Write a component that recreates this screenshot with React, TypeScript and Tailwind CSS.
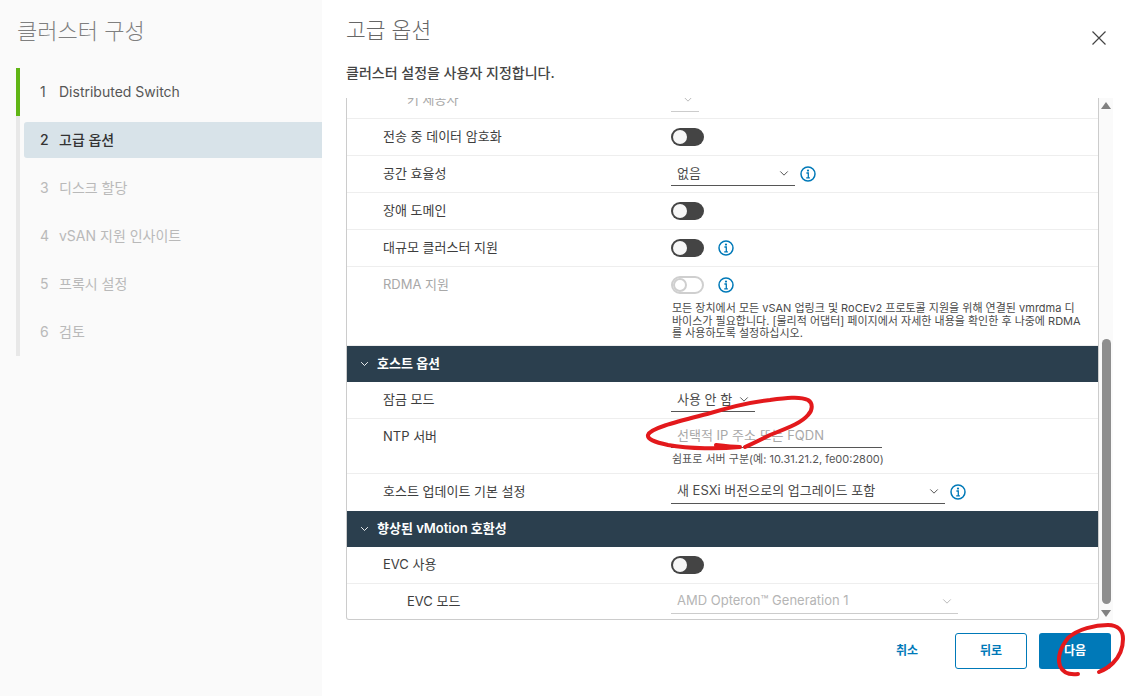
import React from 'react';

const font = 'font-["Inter","Noto_Sans_CJK_KR",sans-serif]';

const steps = [
  { n: 1, label: 'Distributed Switch', state: 'done' },
  { n: 2, label: '고급 옵션', state: 'active' },
  { n: 3, label: '디스크 할당', state: 'off' },
  { n: 4, label: 'vSAN 지원 인사이트', state: 'off' },
  { n: 5, label: '프록시 설정', state: 'off' },
  { n: 6, label: '검토', state: 'off' },
];

function Chevron({ className }: { className: string }) {
  return (
    <svg viewBox="0 0 12 8" fill="none" stroke="currentColor" strokeWidth="1.2" className={className}>
      <path d="M1.5 1.5 6 6l4.5-4.5" />
    </svg>
  );
}

function Info() {
  return (
    <svg viewBox="0 0 16 16" className="w-4 h-4 shrink-0 text-[#0079b8]" fill="none" stroke="currentColor">
      <circle cx="8" cy="8" r="7" strokeWidth="1.5" />
      <circle cx="8" cy="4.6" r="1.1" fill="currentColor" stroke="none" />
      <path d="M6.4 7h1.9v4.6M6.2 11.8h3.7" strokeWidth="1.3" />
    </svg>
  );
}

function Toggle({ disabled }: { disabled?: boolean }) {
  if (disabled) {
    return (
      <div className="w-[33px] h-[18px] rounded-full border-2 border-[#cfcfcf] bg-white flex items-center">
        <div className="w-[14px] h-[14px] rounded-full border-2 border-[#cfcfcf] bg-white" />
      </div>
    );
  }
  return (
    <div className="w-[33px] h-[18px] rounded-full bg-[#444444] flex items-center pl-[2px]">
      <div className="w-[14px] h-[14px] rounded-full bg-[#f7f7f7]" />
    </div>
  );
}

function Select({ value, width, textClass, lineClass, chevronClass }: { value: string; width: string; textClass?: string; lineClass?: string; chevronClass?: string }) {
  return (
    <div className={`${width} h-[24px] flex items-center justify-between pl-[6px] pr-[6px] border-b ${lineClass ?? 'border-[#565656]'} ${textClass ?? 'text-[#4a4a4a]'}`}>
      <span className="text-[13px] whitespace-nowrap">{value}</span>
      <Chevron className={`w-[10px] h-[7px] shrink-0 ${chevronClass ?? 'text-[#565656]'}`} />
    </div>
  );
}

function Row({ label, indent, muted, last, children }: { label: string; indent?: boolean; muted?: boolean; last?: boolean; children: React.ReactNode }) {
  return (
    <div className={`flex items-center h-[37px] ${last ? 'pb-[2px]' : 'border-b border-[#eeeeee]'}`}>
      <div className={`w-[324px] shrink-0 text-[13px] ${indent ? 'pl-[60px]' : 'pl-[36px]'} ${muted ? 'text-[#a8a8a8]' : 'text-[#3d3d3d]'}`}>
        {label}
      </div>
      <div className="flex items-center gap-[14px]">{children}</div>
    </div>
  );
}

function SectionHead({ title }: { title: string }) {
  return (
    <div className="h-[36px] bg-[#2b3f4e] text-white flex items-center pl-[13px] gap-[8px] text-[13px] font-semibold">
      <Chevron className="w-[9px] h-[6px]" />
      {title}
    </div>
  );
}

export default function App() {
  return (
    <div className={`${font} w-[1144px] h-[696px] flex bg-white overflow-hidden relative`}>
      <aside className="w-[322px] shrink-0 bg-[#fafafa] pt-[15px]">
        <h1 className="pl-[17px] text-[22px] font-light leading-[32px] text-[#7f7f7f]">클러스터 구성</h1>
        <div className="ml-[16px] mt-[21px] pt-[6px] border-l-4 border-[#e8e8e8] h-[288px] relative">
          <div className="absolute -left-[4px] top-0 w-[4px] h-[48px] bg-[#60b515]" />
          {steps.map((s) => (
            <div
              key={s.n}
              className={`h-[36px] mb-[12px] ml-[4px] pl-[16px] pb-[2px] flex items-center gap-[11px] text-[14px] rounded-l-[3px] ${
                s.state === 'active' ? 'bg-[#d8e3e9] text-[#333333] font-medium' : s.state === 'done' ? 'text-[#565656]' : 'text-[#b9b9b9]'
              }`}
            >
              <span className="w-[8px]">{s.n}</span>
              <span>{s.label}</span>
            </div>
          ))}
        </div>
      </aside>

      <main className="flex-1 pl-[24px] pr-[33px] pt-[15px] flex flex-col">
        <div className="flex items-start justify-between">
          <h2 className="text-[21.5px] font-light leading-[30px] text-[#666666]">고급 옵션</h2>
          <svg viewBox="0 0 14 14" className="w-[14px] h-[14px] mt-[16px] mr-[7px] text-[#444444]" fill="none" stroke="currentColor" strokeWidth="1.2">
            <path d="M.5.5l13 13M13.5.5l-13 13" />
          </svg>
        </div>
        <p className="mt-[20px] text-[14px] font-medium leading-[16px] text-[#444444]">클러스터 설정을 사용자 지정합니다.</p>

        <div className="mt-[17px] flex items-stretch w-[767px] h-[522px]">
          <div className="w-[753px] shrink-0 border-l border-r border-b border-[#cccccc] rounded-b-[3px] overflow-hidden">
            <div className="h-[21px] overflow-hidden border-b border-[#eeeeee]">
              <div className="-mt-[17px] flex items-center h-[37px]">
                <div className="w-[324px] pl-[60px] text-[13px] text-[#a8a8a8]">키 제공자</div>
                <Select value="" width="w-[28px]" lineClass="border-[#cccccc]" chevronClass="text-[#bbbbbb]" />
              </div>
            </div>
            <Row label="전송 중 데이터 암호화"><Toggle /></Row>
            <Row label="공간 효율성">
              <Select value="없음" width="w-[124px]" />
              <div className="-ml-[9px]"><Info /></div>
            </Row>
            <Row label="장애 도메인"><Toggle /></Row>
            <Row label="대규모 클러스터 지원"><Toggle /><Info /></Row>
            <div className="h-[79px] flex border-b border-[#eeeeee]">
              <div className="w-[324px] shrink-0 pl-[36px] pt-[8px] text-[13px] text-[#a8a8a8]">RDMA 지원</div>
              <div className="pt-[9px]">
                <div className="flex items-center gap-[14px]"><Toggle disabled /><Info /></div>
                <p className="mt-[8px] ml-[1px] text-[11px] leading-[12.5px] text-[#4a4a4a] whitespace-nowrap">
                  모든 장치에서 모든 vSAN 업링크 및 RoCEv2 프로토콜 지원을 위해 연결된 vmrdma 디<br />
                  바이스가 필요합니다. [물리적 어댑터] 페이지에서 자세한 내용을 확인한 후 나중에 RDMA<br />
                  를 사용하도록 설정하십시오.
                </p>
              </div>
            </div>
            <SectionHead title="호스트 옵션" />
            <Row label="잠금 모드">
              <Select value="사용 안 함" width="w-[84px]" />
            </Row>
            <div className="h-[55px] flex border-b border-[#eeeeee]">
              <div className="w-[324px] shrink-0 pl-[36px] pt-[8px] text-[13px] text-[#3d3d3d]">NTP 서버</div>
              <div className="pt-[5px]">
                <div className="w-[211px] h-[24px] pl-[6px] flex items-center border-b border-[#565656] text-[13px] text-[#a8a8a8]">선택적 IP 주소 또는 FQDN</div>
                <p className="mt-[4px] ml-[1px] text-[11px] leading-[14px] text-[#565656] whitespace-nowrap">쉼표로 서버 구분(예: 10.31.21.2, fe00:2800)</p>
              </div>
            </div>
            <Row label="호스트 업데이트 기본 설정" last>
              <Select value="새 ESXi 버전으로의 업그레이드 포함" width="w-[274px]" />
              <div className="-ml-[9px]"><Info /></div>
            </Row>
            <SectionHead title="향상된 vMotion 호환성" />
            <Row label="EVC 사용"><Toggle /></Row>
            <Row label="EVC 모드" indent last>
              <Select value="AMD Opteron™ Generation 1" width="w-[287px]" textClass="text-[#b5b5b5]" lineClass="border-[#cccccc]" chevronClass="text-[#bbbbbb]" />
            </Row>
          </div>

          <div className="w-[14px] shrink-0 bg-[#fafafa] flex flex-col items-center justify-between pt-[4px] pb-[3px]">
            <div className="w-0 h-0 border-x-[5px] border-x-transparent border-b-[7px] border-b-[#808080]" />
            <div className="flex-1 flex flex-col justify-end mb-[6px] mt-[4px]">
              <div className="w-[9px] h-[265px] rounded-full bg-[#8e8e8e]" />
            </div>
            <div className="w-0 h-0 border-x-[5px] border-x-transparent border-t-[7px] border-t-[#808080]" />
          </div>
        </div>

        <div className="mt-[13px] flex justify-end items-center text-[12px] font-semibold w-[765px]">
          <span className="text-[#0079b8] mr-[37px]">취소</span>
          <div className="w-[72px] h-[36px] border border-[#0079b8] rounded-[3px] text-[#0079b8] flex items-center justify-center">뒤로</div>
          <div className="ml-[12px] w-[72px] h-[36px] bg-[#0079b8] rounded-[3px] text-white flex items-center justify-center">다음</div>
        </div>
      </main>

      {/* 빨간 펜 표시 */}
      <svg className="absolute inset-0 w-full h-full pointer-events-none" viewBox="0 0 1144 696" fill="none" stroke="#e3191c" strokeWidth="4" strokeLinecap="round" strokeLinejoin="round">
        <path d="M716 445C724 446 732 447 740 447C720 449 690 449 668 445C654 442 647 439 648 435C650 428 680 421 707 414C730 407 750 402 770 400C785 398 800 396 808 400C813 403 813 410 808 415C802 422 793 426 770 435C760 440 752 444 745 447" />
        <path d="M1078 674c-8 1-15-1-18-8-3-9 1-19 8-28 10-9 27-13 40-13 10 0 15 6 15 14 0 11-5 19-10 24-4 4-9 7-14 9" />
      </svg>
    </div>
  );
}
